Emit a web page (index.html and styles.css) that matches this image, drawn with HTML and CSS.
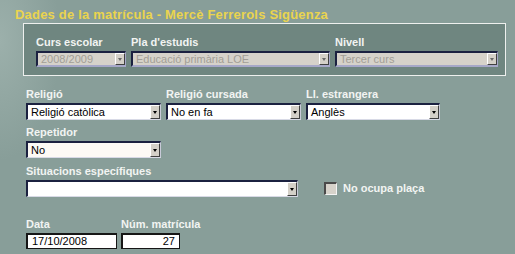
FILE: index.html
```html
<!DOCTYPE html>
<html lang="ca">
<head>
<meta charset="utf-8">
<title>Dades de la matrícula</title>
<link rel="stylesheet" href="styles.css">
</head>
<body>
<div class="page">
  <h1 class="title">Dades de la matrícula - Mercè Ferrerols Sigüenza</h1>

  <div class="box">
    <div class="row">
      <div class="field w-curs">
        <div class="label">Curs escolar</div>
        <div class="sel disabled"><span class="val">2008/2009</span><span class="btn"><i class="arrow"></i></span></div>
      </div>
      <div class="field w-pla">
        <div class="label">Pla d'estudis</div>
        <div class="sel disabled"><span class="val">Educació primària LOE</span><span class="btn"><i class="arrow"></i></span></div>
      </div>
      <div class="field w-nivell">
        <div class="label">Nivell</div>
        <div class="sel disabled"><span class="val">Tercer curs</span><span class="btn"><i class="arrow"></i></span></div>
      </div>
    </div>
  </div>

  <div class="form">
    <div class="row row-main">
      <div class="field w-std">
        <div class="label">Religió</div>
        <div class="sel"><span class="val">Religió catòlica</span><span class="btn"><i class="arrow"></i></span></div>
      </div>
      <div class="field w-std">
        <div class="label">Religió cursada</div>
        <div class="sel"><span class="val">No en fa</span><span class="btn"><i class="arrow"></i></span></div>
      </div>
      <div class="field w-std2">
        <div class="label">Ll. estrangera</div>
        <div class="sel"><span class="val">Anglès</span><span class="btn"><i class="arrow"></i></span></div>
      </div>
    </div>

    <div class="row row-rep">
      <div class="field w-std">
        <div class="label">Repetidor</div>
        <div class="sel cream"><span class="val">No</span><span class="btn"><i class="arrow"></i></span></div>
      </div>
    </div>

    <div class="row row-sit">
      <div class="field w-sit">
        <div class="label">Situacions específiques</div>
        <div class="sel"><span class="val"></span><span class="btn"><i class="arrow"></i></span></div>
      </div>
      <label class="check">
        <span class="box-check"></span>
        <span class="check-text">No ocupa plaça</span>
      </label>
    </div>

    <div class="row row-data">
      <div class="field w-data">
        <div class="label">Data</div>
        <div class="input">17/10/2008</div>
      </div>
      <div class="field w-num">
        <div class="label">Núm. matrícula</div>
        <div class="input right">27</div>
      </div>
    </div>
  </div>
</div>
</body>
</html>
```

FILE: styles.css
```css
html, body {
  margin: 0;
  padding: 0;
}

body {
  width: 515px;
  height: 254px;
  overflow: hidden;
  background: #889e99;
  background-image: radial-gradient(ellipse 60px 120px at 0 40px, #9cb0ab 0%, rgba(136, 158, 153, 0) 100%);
  font-family: "Liberation Sans", Arial, sans-serif;
  font-size: 11px;
  color: #000;
}

.page {
  padding-top: 7px;
}

.title {
  margin: 0 0 1px 15px;
  font-size: 13px;
  line-height: 15px;
  font-weight: bold;
  letter-spacing: 0.2px;
  color: #ead44e;
  white-space: nowrap;
}

.box {
  margin-left: 23px;
  width: 483px;
  height: 53px;
  border: 1px solid #eef0ee;
  background: #6f8680;
  padding: 11px 0 0 12px;
  box-sizing: border-box;
}

.row {
  display: flex;
  align-items: flex-start;
  gap: 5px;
}

.field {
  display: flex;
  flex-direction: column;
}

.label {
  height: 15px;
  line-height: 15px;
  margin-bottom: 1px;
  font-weight: bold;
  color: #f2f4f2;
  white-space: nowrap;
}

.w-curs { width: 90px; }
.w-pla { width: 199px; }
.w-nivell { width: 163px; }
.w-std { width: 135px; }
.w-std2 { width: 134px; }
.w-sit { width: 272px; }
.w-data { width: 91px; }
.w-num { width: 59px; }

.form {
  padding: 11px 0 0 26px;
}

.row-rep {
  margin-top: 5px;
}

.row-sit {
  margin-top: 6px;
  align-items: flex-end;
}

.row-data {
  margin-top: 20px;
  gap: 4px;
}

.sel {
  display: flex;
  align-items: stretch;
  height: 17px;
  box-sizing: border-box;
  background: #ffffff;
  border-top: 2px solid #1b2140;
  border-left: 2px solid #1b2140;
  border-bottom: 1px solid #d8dae6;
  border-right: 1px solid #c8cad8;
}

.sel.disabled {
  background: #d6d2ca;
  border-bottom-color: #a6a8c8;
  border-right-color: #a6a8c8;
  border-bottom-width: 2px;
  height: 16px;
}

.sel.cream {
  background: #fdfaf5;
}

.val {
  flex: 1;
  padding-left: 3px;
  line-height: 14px;
  white-space: nowrap;
  overflow: hidden;
}

.disabled .val {
  color: #a29e96;
  line-height: 12px;
}

.btn {
  width: 10px;
  flex: none;
  background: #d4d0c8;
  border-top: 1px solid #ffffff;
  border-left: 1px solid #ffffff;
  border-right: 1px solid #404040;
  border-bottom: 1px solid #404040;
  box-sizing: border-box;
  display: flex;
  align-items: center;
  justify-content: center;
}

.arrow {
  width: 0;
  height: 0;
  border-left: 2px solid transparent;
  border-right: 2px solid transparent;
  border-top: 3px solid #000;
}

.disabled .arrow {
  border-top-color: #6a6a6a;
}

.check {
  display: flex;
  align-items: center;
  gap: 6px;
  margin-left: 21px;
  margin-bottom: 2px;
}

.box-check {
  width: 13px;
  height: 13px;
  box-sizing: border-box;
  background: #d6d2ca;
  border-top: 2px solid #4a4a4a;
  border-left: 2px solid #4a4a4a;
  border-bottom: 1px solid #f4f4f4;
  border-right: 1px solid #f4f4f4;
}

.check-text {
  font-weight: bold;
  color: #f2f4f2;
  line-height: 13px;
}

.input {
  height: 16px;
  box-sizing: border-box;
  background: #ffffff;
  border: 2px solid #161616;
  border-right-width: 1px;
  border-bottom-width: 1px;
  padding: 0 4px;
  line-height: 13px;
  white-space: nowrap;
}

.input.right {
  text-align: right;
}
```
